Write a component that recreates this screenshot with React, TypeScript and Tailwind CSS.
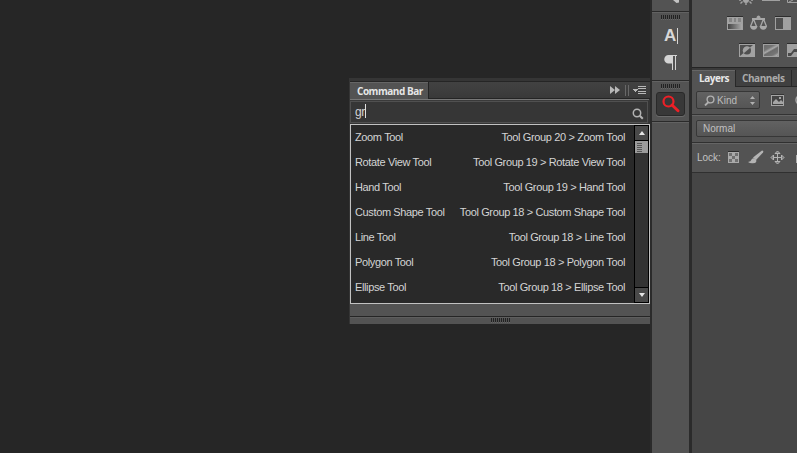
import React from "react";

const rows: [string, string][] = [
  ["Zoom Tool", "Tool Group 20 > Zoom Tool"],
  ["Rotate View Tool", "Tool Group 19 > Rotate View Tool"],
  ["Hand Tool", "Tool Group 19 > Hand Tool"],
  ["Custom Shape Tool", "Tool Group 18 > Custom Shape Tool"],
  ["Line Tool", "Tool Group 18 > Line Tool"],
  ["Polygon Tool", "Tool Group 18 > Polygon Tool"],
  ["Ellipse Tool", "Tool Group 18 > Ellipse Tool"],
];

const sans = "font-['Liberation_Sans',Arial,sans-serif]";
const humanist = "font-['Open_Sans',sans-serif]";

function Grip({ count = 10 }: { count?: number }) {
  return (
    <div className="flex gap-px">
      {Array.from({ length: count }, (_, i) => (
        <i key={i} className="block h-[4px] w-px bg-[#222] shadow-[0_1px_0_#656565]" />
      ))}
    </div>
  );
}

function CommandBar() {
  return (
    <section className={`h-[246px] w-[301px] bg-[#353535] pt-[3px] pl-px ${sans}`}>
      <header className="flex h-[18px] border-t border-[#252525] bg-[#3b3b3b]">
        <div className={`w-[78px] border-t border-[#666] bg-[#535353] pl-[7px] text-[10px] leading-[16px] font-bold text-[#e6e6e6] ${humanist}`}>
          <span className="whitespace-nowrap tracking-[-0.480px]">Command Bar</span>
        </div>
        <div className="flex flex-1 border-b border-l border-[#242424] bg-gradient-to-b from-[#424242] to-[#393939]">
          <svg className="ml-auto h-[17px] w-[42px]" viewBox="0 0 42 17" shapeRendering="crispEdges">
            <path d="M2 4l5 4-5 4zM7 4l5 4-5 4z" fill="#b8b8b8" shapeRendering="auto" />
            <path d="M17.500 3v11M20.500 3v11" stroke="#686868" />
            <path d="M24 7h6l-3 3z" fill="#b8b8b8" />
            <path d="M30 4.500h8M30 6.500h8M30 9.500h8M30 11.500h8" stroke="#b8b8b8" />
          </svg>
        </div>
      </header>
      <div className="mr-px h-[2px] border-t border-[#777] bg-[#3a3a3a]" />
      <div className="mr-[2px] flex h-[22px] border border-[#505050] bg-[#363636] pl-[4px] text-[12px] leading-[20px] text-[#d4d4d4]">
        <span className="tracking-[-0.300px]">gr</span>
        <i className="mt-[2px] block h-[14px] w-px bg-[#e0e0e0]" />
        <svg className="mt-[6px] mr-[3px] ml-auto h-[12px] w-[12px]" viewBox="0 0 12 12">
          <circle cx="5" cy="5" r="3.700" fill="none" stroke="#b3b3b3" strokeWidth="1.500" />
          <path d="M7.800 7.800l3 3" stroke="#b3b3b3" strokeWidth="2" />
        </svg>
      </div>
      <div className="mt-px flex h-[180px] border border-[#c2c2c2] bg-[#292929]">
        <ul className="flex-1">
          {rows.map(([name, path]) => (
            <li key={name} className="flex h-[25px] justify-between pr-[9px] pl-[4px] text-[11px] leading-[24px] whitespace-nowrap text-[#d4d4d4]">
              <span className="tracking-[-0.370px]">{name}</span>
              <span className="tracking-[-0.370px]">{path}</span>
            </li>
          ))}
        </ul>
        <div className="flex w-[15px] flex-col border-l border-black bg-[#333]">
          <div className="flex h-[16px] items-center justify-center border-t border-r border-b border-black bg-[#494949]">
            <svg className="h-[4px] w-[6px]" viewBox="0 0 6 4"><path d="M0 4L3 0l3 4z" fill="#e5e5e5" /></svg>
          </div>
          <div className="h-[12px] border-r border-black bg-[#9b9b9b] pt-[2px] pl-[2px]">
            <div className="h-px w-[5px] bg-[#555] shadow-[0_2px_0_#555,0_4px_0_#555,0_6px_0_#555,0_8px_0_#555]" />
          </div>
          <div className="flex-1 border-r border-black" />
          <div className="flex h-[16px] items-center justify-center border-t border-r border-b border-black bg-[#494949]">
            <svg className="h-[4px] w-[6px]" viewBox="0 0 6 4"><path d="M0 0h6L3 4z" fill="#e5e5e5" /></svg>
          </div>
        </div>
      </div>
      <div className="h-[12px] bg-[#535353]" />
      <div className="flex h-[8px] justify-center border-t border-[#252525] bg-[#535353] shadow-[inset_0_1px_0_#5e5e5e]">
        <div className="mt-px"><Grip /></div>
      </div>
    </section>
  );
}

function Dock() {
  return (
    <aside className="flex w-[42px] flex-col border-r-[3px] border-l-[2px] border-r-[#2b2b2b] border-l-[#2b2b2b] bg-[#535353]">
      <div className="h-[12px] border-b border-[#2a2a2a]">
        <svg className="h-[11px] w-[37px]" viewBox="0 0 37 11">
          <path d="M21 0h6v2.500l-2.500.5z" fill="#c4c4c4" />
        </svg>
      </div>
      <div className="flex h-[69px] flex-col items-center border-t border-b border-t-[#626262] border-b-[#2a2a2a] pt-[2px]">
        <Grip />
        <div className="mt-[6px] flex h-[21px] items-center pl-[1px] text-[17px] leading-[21px] text-[#d8d8d8] font-['Liberation_Sans',Arial,sans-serif]">
          <span className="font-bold tracking-[-0.500px]">A</span>
          <i className="ml-px block h-[16px] w-px bg-[#d4d4d4]" />
        </div>
        <svg className="mt-[8px] h-[18px] w-[37px]" viewBox="0 0 37 18">
          <path d="M21 1h-4.500a4 4 0 000 8.500H21z" fill="#d4d4d4" />
          <path d="M20.500 1v15M23.500 1v15M17 1.500h8" fill="none" stroke="#d4d4d4" shapeRendering="crispEdges" />
        </svg>
      </div>
      <div className="flex h-[41px] flex-col items-center border-t border-b border-t-[#626262] border-b-[#2a2a2a] pt-[2px]">
        <Grip />
        <div className="mt-[4px] flex h-[24px] w-[29px] items-center justify-center rounded-[3px] border border-[#292929] bg-[#383838] shadow-[0_1px_0_#6a6a6a]">
          <svg className="h-[18px] w-[18px]" viewBox="0 0 18 18">
            <circle cx="6.500" cy="6.500" r="5" fill="none" stroke="#ed2027" strokeWidth="2.200" />
            <path d="M10 10l6 5.800" stroke="#ed2027" strokeWidth="2.900" strokeLinecap="round" />
          </svg>
        </div>
      </div>
      <div className="flex-1 border-t border-[#626262]" />
    </aside>
  );
}

function Adjustments() {
  return (
    <svg className="block h-[67px] w-[105px] bg-[#535353]" viewBox="692 0 105 67">
      <defs>
        <linearGradient id="bw"><stop stopColor="#444" /><stop offset="1" stopColor="#aaa" /></linearGradient>
        <linearGradient id="ramp" gradientUnits="userSpaceOnUse" x1="764" y1="46" x2="768" y2="53" spreadMethod="repeat">
          <stop stopColor="#6c6c6c" /><stop offset="0.5" stopColor="#757575" /><stop offset="0.8" stopColor="#a9a9a9" /><stop offset="1" stopColor="#6c6c6c" />
        </linearGradient>
      </defs>
      <path d="M743 0a3 3 0 006 0" fill="#a5a5a5" />
      <path d="M742.500 1.500l-2 2M749.500 1.500l2 2M746 2.500V5M739 0h2M751 0h2" stroke="#a5a5a5" strokeWidth="1.400" fill="none" />
      <path d="M762 0.500h18M787.500 0v2.500H797M789 2l4-2" stroke="#a0a0a0" fill="none" />
      <path d="M727 16.500h16M775 16.500h16M739 43.500h16M763 43.500h16M787 43.500h10" stroke="#2d2d2d" />
      <rect x="727" y="17" width="16" height="13" fill="#a2a2a2" />
      <path d="M729 18h3v4h-3zM734 18h2v4h-2zM738 18h3v4h-3z" fill="#858585" />
      <rect x="728" y="24" width="14" height="5" fill="url(#bw)" />
      <g fill="none" stroke="#a8a8a8">
        <path d="M752 19h13M758.500 16v3" strokeWidth="1.800" />
        <path d="M753.500 19l-3 7.500M753.500 19l3 7.500M763.500 19l-3 7.500M763.500 19l3 7.500" strokeWidth="1.300" />
        <circle cx="758.500" cy="17.500" r="1.500" fill="#a8a8a8" />
        <path d="M750 26h7.500q-.5 3.700-3.750 3.700T750 26zM759.500 26h7.500q-.5 3.700-3.750 3.700T759.500 26z" fill="#a8a8a8" stroke="none" />
      </g>
      <rect x="775" y="17" width="16" height="13" fill="#a0a0a0" />
      <rect x="776" y="18" width="7" height="11" fill="#505050" />
      <rect x="739" y="44" width="16" height="13" fill="#a2a2a2" />
      <path d="M740 45h13l-13 11z" fill="#505050" />
      <circle cx="747" cy="50.500" r="4" fill="#505050" />
      <path d="M743.800 53.200a4 4 0 016.400-5.400z" fill="#a2a2a2" />
      <rect x="763.500" y="44.500" width="15" height="12" fill="url(#ramp)" stroke="#a0a0a0" />
      <rect x="787" y="44" width="10" height="13" fill="#a0a0a0" />
      <path d="M788 53h3l3-4h3v3h-3l-3 4h-3z" fill="#494949" />
    </svg>
  );
}

function Layers() {
  return (
    <aside className={`flex w-[105px] flex-col overflow-hidden bg-[#464646] ${humanist}`}>
      <Adjustments />
      <div className="h-[3px] border-t border-[#242424] bg-[#3a3a3a]" />
      <div className="flex h-[17px] text-[10px] leading-[16px] font-bold whitespace-nowrap">
        <div className="w-[43px] border-t border-[#666] bg-[#535353] pl-[7px] leading-[15px] text-[#e8e8e8]"><span className="tracking-[-0.450px]">Layers</span></div>
        <div className="w-[57px] border-x border-b border-[#282828] bg-[#404040] pl-[6px] text-[#aaa]"><span className="tracking-[-0.450px]">Channels</span></div>
        <div className="flex-1 border-b border-[#282828] bg-[#404040]" />
      </div>
      <div className="flex h-[28px] border-b border-[#333] bg-[#535353] pt-[4px] pl-[4px]">
        <div className="flex h-[18px] w-[64px] shrink-0 items-center rounded-[2px] border border-[#373737] bg-gradient-to-b from-[#626262] to-[#555] pl-[7px] text-[10px] text-[#bbb]">
          <svg className="h-[11px] w-[11px] shrink-0" viewBox="0 0 11 11" fill="none" stroke="#b0b0b0">
            <circle cx="6.500" cy="4.500" r="3.400" strokeWidth="1.400" /><path d="M4.500 7L1 10.500" strokeWidth="1.800" />
          </svg>
          <span className="ml-[2px] font-['Liberation_Sans',Arial,sans-serif] text-[10px]">Kind</span>
          <svg className="mr-[4px] ml-auto h-[9px] w-[5px]" viewBox="0 0 5 9"><path d="M0 3l2.500-3L5 3zM0 6l2.500 3L5 6z" fill="#b0b0b0" /></svg>
        </div>
        <svg className="h-[20px] w-[37px] shrink-0" viewBox="760 91 37 20">
          <path d="M771 94.500h13" stroke="#353535" />
          <rect x="771.500" y="95.500" width="12" height="10" fill="#444" stroke="#a5a5a5" />
          <path d="M773 104v-2l3-3 3 3 2-2 2 2v2z" fill="#a5a5a5" /><rect x="779" y="97" width="2" height="2" fill="#a5a5a5" />
          <circle cx="801" cy="100" r="5" fill="none" stroke="#a5a5a5" strokeWidth="1.500" />
        </svg>
      </div>
      <div className="h-[28px] border-t border-b border-t-[#656565] border-b-[#303030] bg-[#535353] pt-[4px] pl-[4px]">
        <div className="h-[17px] w-[120px] rounded-[2px] border border-[#373737] bg-gradient-to-b from-[#626262] to-[#555] pl-[6px] font-['Liberation_Sans',Arial,sans-serif] text-[10px] leading-[15px] text-[#c0c0c0]">Normal</div>
      </div>
      <div className="flex h-[29px] border-t border-t-[#656565] bg-[#535353] pl-[5px] font-['Liberation_Sans',Arial,sans-serif] text-[10px] leading-[28px] text-[#c2c2c2]">
        <span className="w-[25px] shrink-0">Lock:</span>
        <svg className="h-[28px] w-[75px] shrink-0" viewBox="722 144 75 28">
          <path d="M728 151.500h11" stroke="#2d2d2d" />
          <rect x="728" y="152" width="11" height="11" fill="#aaa" />
          <path d="M729 153h3v3h-3zM735 153h3v3h-3zM732 156h3v3h-3zM729 159h3v3h-3zM735 159h3v3h-3z" fill="#707070" />
          <path d="M762 150.500q2 0 1 2l-7 7.500-3-2.500z" fill="#b4b4b4" />
          <path d="M748 162q3-.5 3.500-2.500 2-2.500 4.500 0 1.500 3.500-3 3.800-3 .3-5-1.300z" fill="#b4b4b4" />
          <path d="M777.500 152v11M772 157.500h11" stroke="#b4b4b4" strokeWidth="1" />
          <path d="M775 153.500l2.500-2.500 2.500 2.500zM775 161.500l2.500 2.500 2.500-2.500zM773.500 155l-2.500 2.500 2.500 2.500zM781.500 155l2.500 2.500-2.500 2.500z" fill="#777" stroke="#b4b4b4" />
          <path d="M796 155h1v8h-1z" fill="#b0b0b0" />
        </svg>
      </div>
      <div className="flex-1 border-t border-[#303030]" />
    </aside>
  );
}

export default function App() {
  return (
    <div className="flex h-[453px] w-[797px] overflow-hidden bg-[#262626]">
      <main className="flex w-[650px] shrink-0 justify-end pt-[78px]"><CommandBar /></main>
      <Dock />
      <Layers />
    </div>
  );
}
